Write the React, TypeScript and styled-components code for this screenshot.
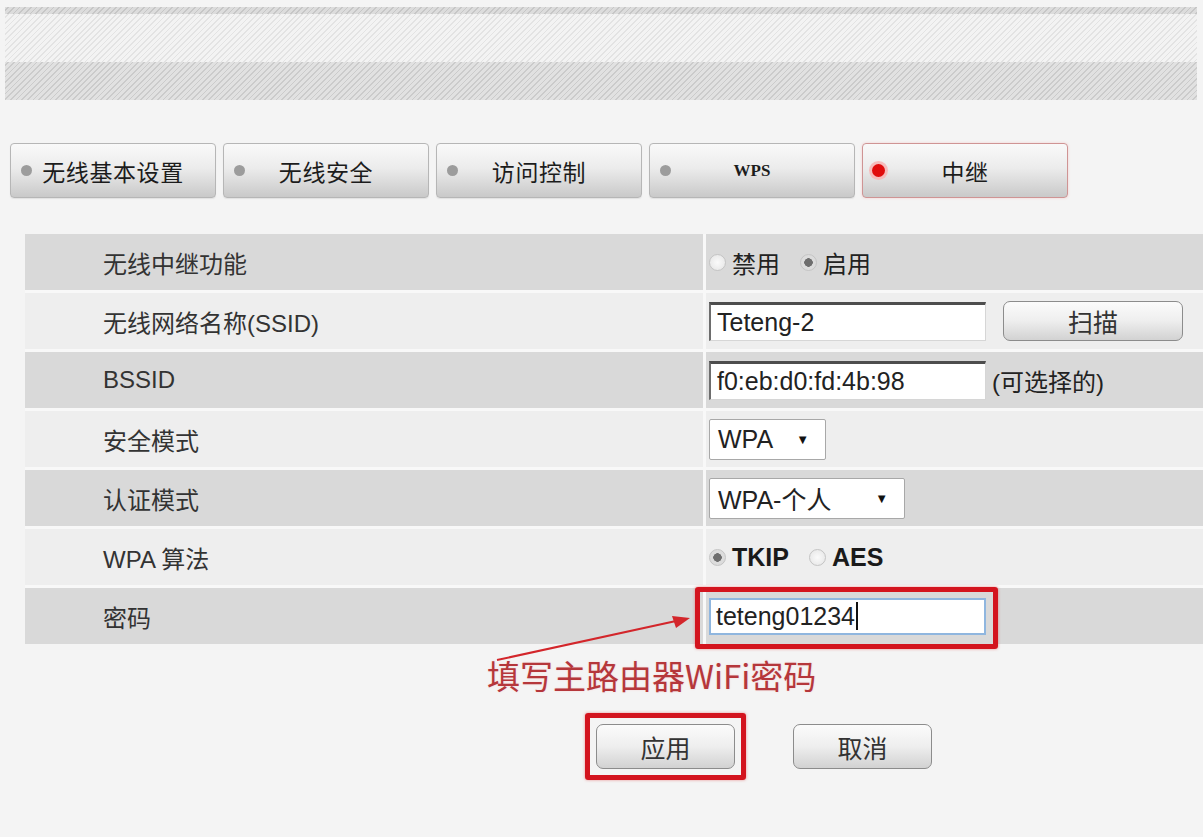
import styled, { createGlobalStyle } from "styled-components";

const GlobalStyle = createGlobalStyle`
  html, body {
    margin: 0;
    padding: 0;
    background: #f4f4f4;
  }
  body {
    width: 1203px;
    height: 837px;
    overflow: hidden;
    font-family: "Liberation Sans", "Noto Sans CJK SC", sans-serif;
  }
`;

const Page = styled.div`
  position: relative;
  width: 1203px;
  height: 837px;
  padding-top: 7px;
  box-sizing: border-box;
  overflow: hidden;
`;

const Banner = styled.div`
  margin: 0 6px 0 5px;
  display: flex;
  flex-direction: column;
`;

const Stripe = styled.div<{ $h: number; $base: string; $line: string }>`
  height: ${(p) => p.$h}px;
  background: repeating-linear-gradient(
    135deg,
    ${(p) => p.$base} 0 2px,
    ${(p) => p.$line} 2px 3.2px,
    ${(p) => p.$base} 3.2px 4px
  );
`;

const TabBar = styled.div`
  display: flex;
  gap: 7px;
  margin: 43px 0 0 10px;
`;

const Tab = styled.div<{ $active?: boolean }>`
  width: 206px;
  height: 55px;
  box-sizing: border-box;
  display: grid;
  grid-template-columns: 30px 1fr 30px;
  align-items: center;
  border: 1px solid ${(p) => (p.$active ? "#cf9494" : "#b6b6b6")};
  border-radius: 4px;
  background: linear-gradient(#f9f9f9, #ececec 45%, #c9c9c9);
  box-shadow: ${(p) => (p.$active ? "0 0 3px #f3cfcf" : "0 1px 1px #e2e2e2")};
  color: #1c1c1c;
`;

const TabDot = styled.span<{ $active?: boolean }>`
  justify-self: center;
  width: ${(p) => (p.$active ? 13 : 11)}px;
  height: ${(p) => (p.$active ? 13 : 11)}px;
  border-radius: 50%;
  background: ${(p) => (p.$active ? "#e00d0d" : "#9c9c9c")};
  box-shadow: ${(p) => (p.$active ? "0 0 0 3px #f6bcbc" : "none")};
`;

const TabText = styled.span<{ $serif?: boolean }>`
  text-align: center;
  font-family: ${(p) =>
    p.$serif ? '"Liberation Serif", serif' : '"Noto Sans CJK SC", sans-serif'};
  font-size: ${(p) => (p.$serif ? 17 : 23)}px;
  font-weight: ${(p) => (p.$serif ? 700 : 400)};
  letter-spacing: ${(p) => (p.$serif ? 0 : 0.6)}px;
`;

const Form = styled.div`
  margin: 36px 0 0 25px;
  display: flex;
  flex-direction: column;
  gap: 3px;
  background: #f8f8f8;
`;

const Row = styled.div`
  display: grid;
  grid-template-columns: 678px 1fr;
  column-gap: 3px;
  height: 56px;
`;

const Label = styled.div<{ $shade: boolean }>`
  display: flex;
  align-items: center;
  padding-left: 78px;
  background: ${(p) => (p.$shade ? "#d9d9d9" : "#eeeeee")};
  font-size: 24px;
  color: #333;
`;

const Value = styled.div<{ $shade: boolean }>`
  position: relative;
  display: flex;
  align-items: center;
  padding-left: 3px;
  background: ${(p) => (p.$shade ? "#d9d9d9" : "#eeeeee")};
  font-size: 24px;
  color: #222;
`;

const Choice = styled.label`
  display: flex;
  align-items: center;
  gap: 6px;
  margin-right: 20px;
`;

const Radio = styled.span<{ $on?: boolean }>`
  width: 17px;
  height: 17px;
  box-sizing: border-box;
  border-radius: 50%;
  border: 1px solid #c4c4c4;
  background: radial-gradient(
    circle,
    ${(p) => (p.$on ? "#6e6e6e 0 4px, #dcdcdc 4.5px" : "#fafafa 0, #e4e4e4 100%")}
  );
`;

const BoldText = styled.span`
  font-weight: 700;
  font-size: 25px;
  color: #1a1a1a;
`;

const Field = styled.div<{ $w: number }>`
  width: ${(p) => p.$w}px;
  height: 39px;
  box-sizing: border-box;
  display: flex;
  align-items: center;
  padding-left: 6px;
  background: #fff;
  border-top: 3px solid #4d4d4d;
  border-left: 2px solid #6d6d6d;
  border-right: 1px solid #d6d6d6;
  border-bottom: 1px solid #d6d6d6;
  font-size: 25px;
  color: #222;
`;

const FocusField = styled(Field)`
  height: 37px;
  border: 2px solid #8fb6df;
  padding-left: 5px;
`;

const Caret = styled.span`
  display: inline-block;
  width: 2px;
  height: 28px;
  margin-left: 1px;
  background: #111;
`;

const Highlight = styled.span`
  position: absolute;
  left: -11px;
  top: -1px;
  width: 303px;
  height: 62px;
  box-sizing: border-box;
  border: 5px solid #d3141e;
  border-radius: 3px;
  box-shadow: 0 0 3px rgba(220, 60, 60, 0.55);
  pointer-events: none;
`;

const Note = styled.span`
  margin-left: 6px;
  font-size: 24px;
  color: #222;
`;

const Select = styled.div<{ $w: number }>`
  width: ${(p) => p.$w}px;
  height: 41px;
  box-sizing: border-box;
  display: flex;
  align-items: center;
  justify-content: space-between;
  padding: 0 16px 0 8px;
  background: #fff;
  border: 1px solid #a8a8a8;
  border-radius: 2px;
  font-size: 25px;
  color: #222;
`;

const Arrow = styled.span`
  font-size: 13px;
  color: #111;
`;

const PushButton = styled.div<{ $w: number; $h: number }>`
  width: ${(p) => p.$w}px;
  height: ${(p) => p.$h}px;
  box-sizing: border-box;
  display: flex;
  align-items: center;
  justify-content: center;
  border: 1px solid #8c8c8c;
  border-radius: 7px;
  background: linear-gradient(#fbfbfb, #eeeeee 50%, #d2d2d2);
  font-family: "Noto Sans CJK SC", sans-serif;
  font-size: 25px;
  color: #333;
`;

const ScanButton = styled(PushButton)`
  margin-left: 17px;
`;

const Annotation = styled.div`
  margin: 10px 0 0 487px;
  font-family: "Noto Sans CJK SC", sans-serif;
  font-size: 33px;
  line-height: 42px;
  color: #b5373b;
  text-shadow: 0 0 2px #f5d0d0;
`;

const Actions = styled.div`
  display: flex;
  align-items: center;
  gap: 47px;
  margin: 17px 0 0 585px;
`;

const ActionFrame = styled.div`
  padding: 6px;
  border: 5px solid #d3141e;
  border-radius: 3px;
  box-shadow: 0 0 3px rgba(220, 60, 60, 0.55);
`;

const Pointer = styled.svg`
  position: absolute;
  left: 490px;
  top: 608px;
`;

const TABS = [
  { label: "无线基本设置" },
  { label: "无线安全" },
  { label: "访问控制" },
  { label: "WPS", serif: true },
  { label: "中继", active: true },
];

function App() {
  return (
    <Page>
      <GlobalStyle />
      <Banner>
        <Stripe $h={7} $base="#dcdcdc" $line="#c6c6c6" />
        <Stripe $h={48} $base="#f3f3f3" $line="#e3e3e3" />
        <Stripe $h={38} $base="#e1e1e1" $line="#cbcbcb" />
      </Banner>

      <TabBar>
        {TABS.map((t) => (
          <Tab key={t.label} $active={t.active}>
            <TabDot $active={t.active} />
            <TabText $serif={t.serif}>{t.label}</TabText>
          </Tab>
        ))}
      </TabBar>

      <Form>
        <Row>
          <Label $shade>无线中继功能</Label>
          <Value $shade>
            <Choice>
              <Radio />
              禁用
            </Choice>
            <Choice>
              <Radio $on />
              启用
            </Choice>
          </Value>
        </Row>
        <Row>
          <Label $shade={false}>无线网络名称(SSID)</Label>
          <Value $shade={false}>
            <Field $w={277}>Teteng-2</Field>
            <ScanButton $w={180} $h={40}>
              扫描
            </ScanButton>
          </Value>
        </Row>
        <Row>
          <Label $shade>BSSID</Label>
          <Value $shade>
            <Field $w={277}>f0:eb:d0:fd:4b:98</Field>
            <Note>(可选择的)</Note>
          </Value>
        </Row>
        <Row>
          <Label $shade={false}>安全模式</Label>
          <Value $shade={false}>
            <Select $w={117}>
              WPA
              <Arrow>▼</Arrow>
            </Select>
          </Value>
        </Row>
        <Row>
          <Label $shade>认证模式</Label>
          <Value $shade>
            <Select $w={196}>
              WPA-个人
              <Arrow>▼</Arrow>
            </Select>
          </Value>
        </Row>
        <Row>
          <Label $shade={false}>WPA 算法</Label>
          <Value $shade={false}>
            <Choice>
              <Radio $on />
              <BoldText>TKIP</BoldText>
            </Choice>
            <Choice>
              <Radio />
              <BoldText>AES</BoldText>
            </Choice>
          </Value>
        </Row>
        <Row>
          <Label $shade>密码</Label>
          <Value $shade>
            <FocusField $w={277}>
              teteng01234
              <Caret />
            </FocusField>
            <Highlight />
          </Value>
        </Row>
      </Form>

      <Annotation>填写主路由器WiFi密码</Annotation>

      <Actions>
        <ActionFrame>
          <PushButton $w={139} $h={45}>
            应用
          </PushButton>
        </ActionFrame>
        <PushButton $w={139} $h={45}>
          取消
        </PushButton>
      </Actions>

      <Pointer width="210" height="60" viewBox="0 0 210 60">
        <line x1="7" y1="52" x2="186" y2="13" stroke="#d3262b" strokeWidth="2" />
        <polygon points="200,10 182,8 186,20" fill="#d3262b" />
      </Pointer>
    </Page>
  );
}

export default App;
